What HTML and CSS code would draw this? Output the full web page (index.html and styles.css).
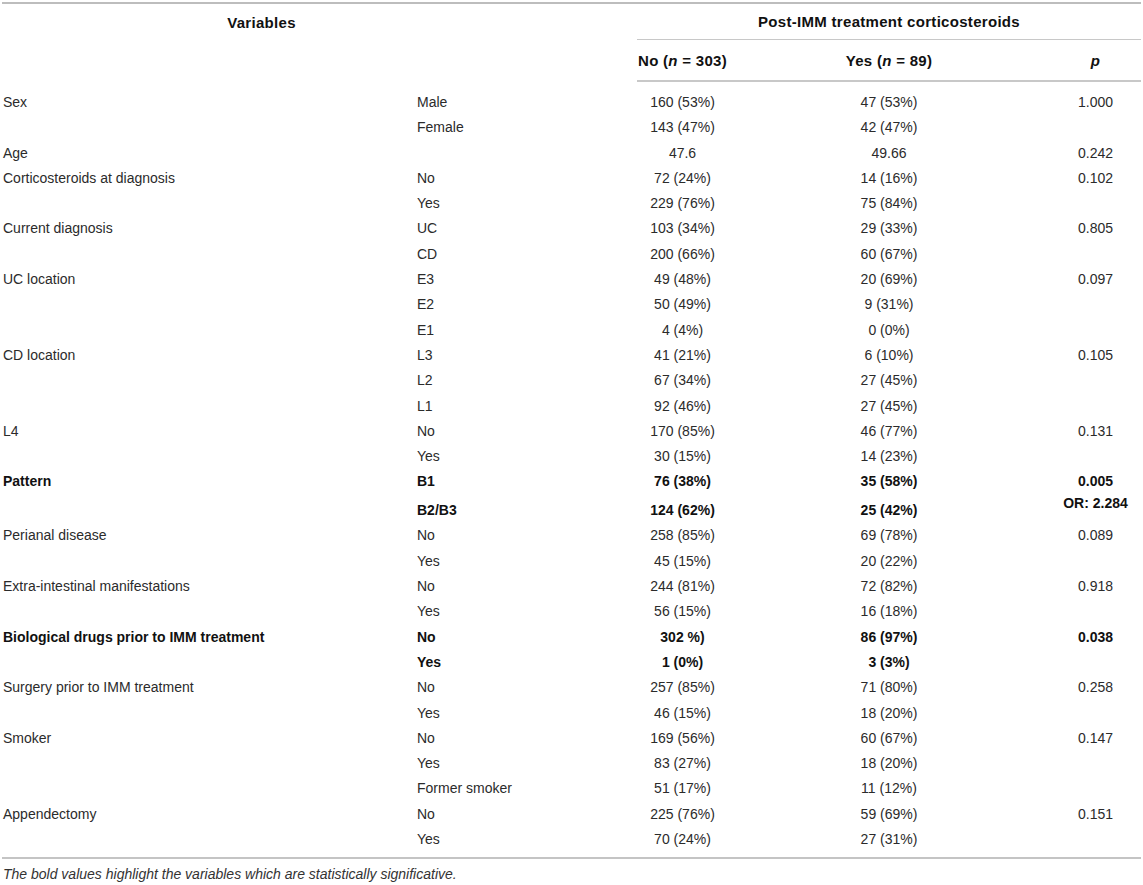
FILE: index.html
```html
<!DOCTYPE html>
<html>
<head>
<meta charset="utf-8">
<link rel="stylesheet" href="styles.css">
</head>
<body>
<div class="wrap">
<table class="tbl">
<colgroup>
<col class="c1"><col class="c2"><col class="c3"><col class="c4"><col class="c5">
</colgroup>
<thead>
<tr class="h1">
<th colspan="2" rowspan="2" class="var">Variables</th>
<th colspan="3" class="post">Post-IMM treatment corticosteroids</th>
</tr>
<tr class="h2">
<th>No (<i>n</i> = 303)</th>
<th>Yes (<i>n</i> = 89)</th>
<th><i>p</i></th>
</tr>
</thead>
<tbody>
<tr class="first"><td>Sex</td><td>Male</td><td class="n">160 (53%)</td><td class="n">47 (53%)</td><td class="n">1.000</td></tr>
<tr><td></td><td>Female</td><td class="n">143 (47%)</td><td class="n">42 (47%)</td><td class="n"></td></tr>
<tr><td>Age</td><td></td><td class="n">47.6</td><td class="n">49.66</td><td class="n">0.242</td></tr>
<tr><td>Corticosteroids at diagnosis</td><td>No</td><td class="n">72 (24%)</td><td class="n">14 (16%)</td><td class="n">0.102</td></tr>
<tr><td></td><td>Yes</td><td class="n">229 (76%)</td><td class="n">75 (84%)</td><td class="n"></td></tr>
<tr><td>Current diagnosis</td><td>UC</td><td class="n">103 (34%)</td><td class="n">29 (33%)</td><td class="n">0.805</td></tr>
<tr><td></td><td>CD</td><td class="n">200 (66%)</td><td class="n">60 (67%)</td><td class="n"></td></tr>
<tr><td>UC location</td><td>E3</td><td class="n">49 (48%)</td><td class="n">20 (69%)</td><td class="n">0.097</td></tr>
<tr><td></td><td>E2</td><td class="n">50 (49%)</td><td class="n">9 (31%)</td><td class="n"></td></tr>
<tr><td></td><td>E1</td><td class="n">4 (4%)</td><td class="n">0 (0%)</td><td class="n"></td></tr>
<tr><td>CD location</td><td>L3</td><td class="n">41 (21%)</td><td class="n">6 (10%)</td><td class="n">0.105</td></tr>
<tr><td></td><td>L2</td><td class="n">67 (34%)</td><td class="n">27 (45%)</td><td class="n"></td></tr>
<tr><td></td><td>L1</td><td class="n">92 (46%)</td><td class="n">27 (45%)</td><td class="n"></td></tr>
<tr><td>L4</td><td>No</td><td class="n">170 (85%)</td><td class="n">46 (77%)</td><td class="n">0.131</td></tr>
<tr><td></td><td>Yes</td><td class="n">30 (15%)</td><td class="n">14 (23%)</td><td class="n"></td></tr>
<tr class="bold b1"><td>Pattern</td><td>B1</td><td class="n">76 (38%)</td><td class="n">35 (58%)</td><td class="n pv" rowspan="2"><div class="pl">0.005</div><div class="pl or">OR: 2.284</div></td></tr>
<tr class="bold"><td></td><td>B2/B3</td><td class="n">124 (62%)</td><td class="n">25 (42%)</td></tr>
<tr><td>Perianal disease</td><td>No</td><td class="n">258 (85%)</td><td class="n">69 (78%)</td><td class="n">0.089</td></tr>
<tr><td></td><td>Yes</td><td class="n">45 (15%)</td><td class="n">20 (22%)</td><td class="n"></td></tr>
<tr><td>Extra-intestinal manifestations</td><td>No</td><td class="n">244 (81%)</td><td class="n">72 (82%)</td><td class="n">0.918</td></tr>
<tr><td></td><td>Yes</td><td class="n">56 (15%)</td><td class="n">16 (18%)</td><td class="n"></td></tr>
<tr class="bold"><td>Biological drugs prior to IMM treatment</td><td>No</td><td class="n">302 %)</td><td class="n">86 (97%)</td><td class="n">0.038</td></tr>
<tr class="bold"><td></td><td>Yes</td><td class="n">1 (0%)</td><td class="n">3 (3%)</td><td class="n"></td></tr>
<tr><td>Surgery prior to IMM treatment</td><td>No</td><td class="n">257 (85%)</td><td class="n">71 (80%)</td><td class="n">0.258</td></tr>
<tr><td></td><td>Yes</td><td class="n">46 (15%)</td><td class="n">18 (20%)</td><td class="n"></td></tr>
<tr><td>Smoker</td><td>No</td><td class="n">169 (56%)</td><td class="n">60 (67%)</td><td class="n">0.147</td></tr>
<tr><td></td><td>Yes</td><td class="n">83 (27%)</td><td class="n">18 (20%)</td><td class="n"></td></tr>
<tr><td></td><td>Former smoker</td><td class="n">51 (17%)</td><td class="n">11 (12%)</td><td class="n"></td></tr>
<tr><td>Appendectomy</td><td>No</td><td class="n">225 (76%)</td><td class="n">59 (69%)</td><td class="n">0.151</td></tr>
<tr class="last"><td></td><td>Yes</td><td class="n">70 (24%)</td><td class="n">27 (31%)</td><td class="n"></td></tr>
</tbody>
</table>
<p class="note">The bold values highlight the variables which are statistically significative.</p>
</div>
</body>
</html>
```

FILE: styles.css
```css
html, body {
  margin: 0;
  padding: 0;
  background: #ffffff;
}

body {
  font-family: "Liberation Sans", Arial, Helvetica, sans-serif;
  font-size: 14px;
  color: #2b2b2b;
}

.wrap {
  padding: 2px 2px 0 2px;
}

.tbl {
  width: 1139px;
  border-collapse: collapse;
  table-layout: fixed;
  border-top: 2px solid #bdbdbd;
  border-bottom: 2px solid #c4c4c4;
}

.c1 { width: 414px; }
.c2 { width: 221px; }
.c3 { width: 91px; }
.c4 { width: 322px; }
.c5 { width: 91px; }

th {
  font-weight: bold;
  font-size: 15px;
  letter-spacing: 0.3px;
  color: #111;
  text-align: center;
  white-space: nowrap;
  padding: 0 1px;
}

th i {
  font-style: italic;
}

.h1 th {
  height: 35px;
  vertical-align: middle;
}

.h1 .var {
  vertical-align: top;
  padding-top: 10px;
  padding-right: 117px;
}

.h1 .post {
  border-bottom: 1px solid #c8c8c8;
}

.h2 th {
  height: 40px;
  border-bottom: 2px solid #c8c8c8;
}

td {
  padding: 4px 1px;
  line-height: 17.3px;
  white-space: nowrap;
  vertical-align: middle;
}

td.n {
  text-align: center;
}

tr.first td {
  padding-top: 12px;
}

tr.last td {
  padding-bottom: 9px;
}

tr.bold td {
  font-weight: bold;
  color: #111;
}

tr.b1 td {
  vertical-align: top;
  padding-bottom: 7.4px;
}

td.pv {
  vertical-align: top;
}

.pl {
  line-height: 17.3px;
}

.pl.or {
  margin-top: 4.7px;
}

.note {
  margin: 7px 0 0 1px;
  font-style: italic;
  font-size: 14px;
  line-height: 16px;
  color: #333;
}
```
